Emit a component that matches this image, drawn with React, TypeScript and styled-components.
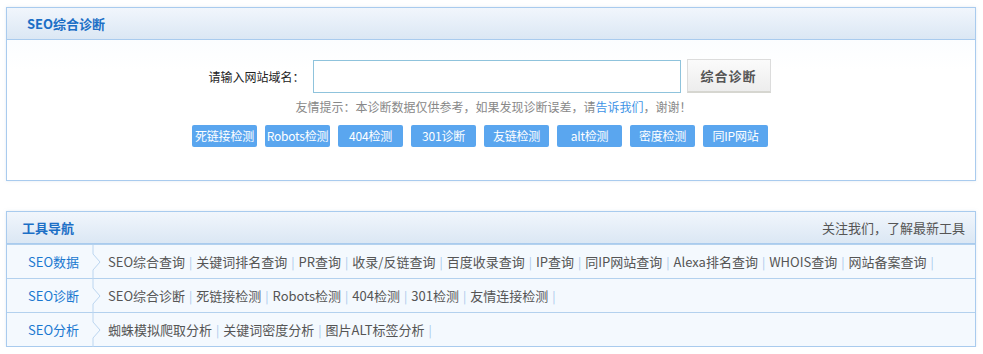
import React from 'react';
import styled, { createGlobalStyle } from 'styled-components';

const GlobalStyle = createGlobalStyle`
  body {
    margin: 0;
    background: #fff;
    font-family: "Liberation Sans", "Noto Sans CJK SC", sans-serif;
  }
`;

const Page = styled.div`
  padding: 7px 7px 0 6px;
  width: 970px;
`;

const Panel = styled.div<{ $gap?: number }>`
  border: 1px solid #a9cbee;
  margin-bottom: ${p => p.$gap ?? 0}px;
  box-shadow: 0 0 3px rgba(180, 200, 220, 0.35);
`;

const Header = styled.div<{ $indent: number }>`
  height: 31px;
  border-bottom: 1px solid #a9cbee;
  background: linear-gradient(#f1f6fc, #dbe7f4);
  display: flex;
  align-items: center;
  justify-content: space-between;
  padding: 0 10px 0 ${p => p.$indent}px;
`;

const Title = styled.h2`
  margin: 0;
  font-size: 13px;
  font-weight: bold;
  color: #1c6fc6;
  font-family: "Noto Sans CJK SC", sans-serif;
`;

const HeaderNote = styled.span`
  font-size: 13px;
  color: #555;
  font-family: "Noto Sans CJK SC", sans-serif;
`;

const DiagBody = styled.div`
  height: 140px;
  background: linear-gradient(#fbfdff, #fff 30px);
  display: flex;
  flex-direction: column;
  align-items: center;
  padding-top: 20px;
  box-sizing: border-box;
`;

const FormRow = styled.div`
  display: flex;
  align-items: center;
  margin-left: -3px;
`;

const Label = styled.label`
  font-size: 12px;
  color: #222;
  font-family: "Noto Sans CJK SC", sans-serif;
  margin-right: 8px;
`;

const Input = styled.input`
  width: 358px;
  height: 31px;
  border: 1px solid #8fc3dc;
  padding: 0 4px;
  box-sizing: content-box;
  outline: none;
`;

const Submit = styled.button`
  margin-left: 6px;
  width: 84px;
  height: 34px;
  margin-top: -2px;
  border: 1px solid #dcdcdc;
  border-bottom: 2px solid #d6d6d0;
  background: linear-gradient(#fbfbfb, #ededed);
  font-size: 13px;
  font-weight: bold;
  color: #555;
  letter-spacing: 1px;
  font-family: "Noto Sans CJK SC", sans-serif;
`;

const Hint = styled.p`
  margin: 5px 0 0 5px;
  font-size: 12px;
  color: #888;
  font-family: "Noto Sans CJK SC", sans-serif;
  a {
    color: #3d93e6;
    text-decoration: none;
  }
`;

const Tags = styled.div`
  display: flex;
  gap: 8px;
  margin-top: 10px;
  padding-right: 22px;
`;

const Tag = styled.a`
  width: 65px;
  height: 22px;
  line-height: 22px;
  text-align: center;
  background: #5aa6ef;
  color: #fff;
  font-size: 12px;
  border-radius: 2px;
  font-family: "Noto Sans CJK SC", sans-serif;
  white-space: nowrap;
  letter-spacing: -0.2px;
`;

const NavRow = styled.div`
  height: 33px;
  background: #f4f9fe;
  border-top: 1px solid #b3d1ee;
  display: flex;
  align-items: center;
  &:first-child {
    border-top: none;
  }
`;

const RowLabel = styled.span`
  width: 64px;
  padding-left: 21px;
  font-size: 13px;
  color: #1a78d0;
  font-family: "Noto Sans CJK SC", sans-serif;
`;

const Chevron = styled.svg`
  width: 14px;
  height: 34px;
  flex: none;
  margin-right: 2px;
`;

const Links = styled.div`
  display: flex;
  align-items: center;
  font-size: 13px;
  color: #555;
  font-family: "Noto Sans CJK SC", sans-serif;
`;

const NavLink = styled.a`
  color: #555;
  text-decoration: none;
  white-space: nowrap;
`;

const Sep = styled.span`
  color: #a8c8ec;
  margin: 0 4px;
  font-size: 12px;
`;

const diagTags = ['死链接检测', 'Robots检测', '404检测', '301诊断', '友链检测', 'alt检测', '密度检测', '同IP网站'];

const navGroups: { label: string; links: string[] }[] = [
  {
    label: 'SEO数据',
    links: ['SEO综合查询', '关键词排名查询', 'PR查询', '收录/反链查询', '百度收录查询', 'IP查询', '同IP网站查询', 'Alexa排名查询', 'WHOIS查询', '网站备案查询'],
  },
  {
    label: 'SEO诊断',
    links: ['SEO综合诊断', '死链接检测', 'Robots检测', '404检测', '301检测', '友情连接检测'],
  },
  {
    label: 'SEO分析',
    links: ['蜘蛛模拟爬取分析', '关键词密度分析', '图片ALT标签分析'],
  },
];

const App: React.FC = () => {
  return (
    <Page>
      <GlobalStyle />
      <Panel $gap={30}>
        <Header $indent={20}>
          <Title>SEO综合诊断</Title>
        </Header>
        <DiagBody>
          <FormRow>
            <Label>请输入网站域名：</Label>
            <Input type="text" />
            <Submit>综合诊断</Submit>
          </FormRow>
          <Hint>
            友情提示：本诊断数据仅供参考，如果发现诊断误差，请<a href="#">告诉我们</a>，谢谢！
          </Hint>
          <Tags>
            {diagTags.map(t => (
              <Tag key={t}>{t}</Tag>
            ))}
          </Tags>
        </DiagBody>
      </Panel>
      <Panel>
        <Header $indent={15}>
          <Title>工具导航</Title>
          <HeaderNote>关注我们，了解最新工具</HeaderNote>
        </Header>
        {navGroups.map(g => (
          <NavRow key={g.label}>
            <RowLabel>{g.label}</RowLabel>
            <Chevron viewBox="0 0 14 34">
              <polyline points="1,0 1,9 8,17 1,25 1,34" fill="none" stroke="#bcd6f0" strokeWidth="1" />
            </Chevron>
            <Links>
              {g.links.map(l => (
                <React.Fragment key={l}>
                  <NavLink href="#">{l}</NavLink>
                  <Sep>|</Sep>
                </React.Fragment>
              ))}
            </Links>
          </NavRow>
        ))}
      </Panel>
    </Page>
  );
};

export default App;
